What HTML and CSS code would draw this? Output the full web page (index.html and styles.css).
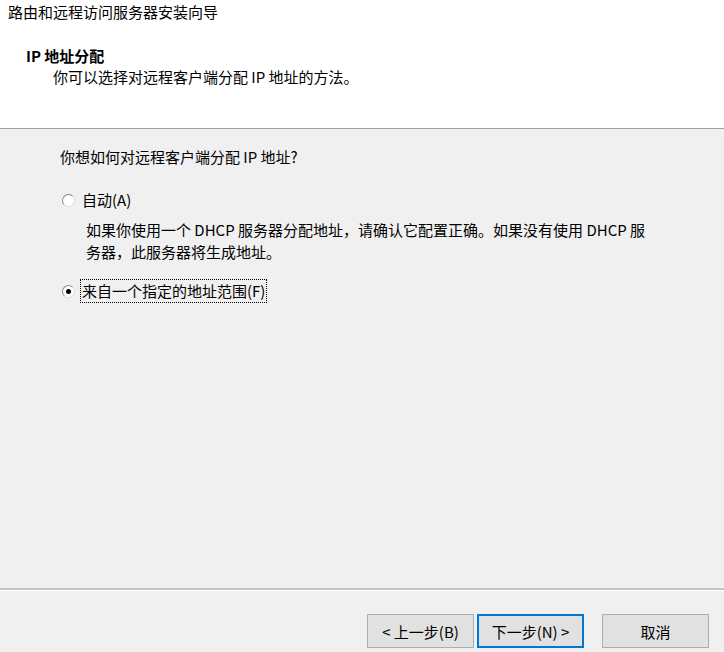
FILE: index.html
```html
<!DOCTYPE html>
<html lang="zh-CN">
<head>
<meta charset="utf-8">
<link rel="stylesheet" href="styles.css">
</head>
<body>
<div class="wizard">
  <div class="header">
    <div class="wtitle">路由和远程访问服务器安装向导</div>
    <div class="htitle">IP 地址分配</div>
    <div class="hsub">你可以选择对远程客户端分配 IP 地址的方法。</div>
  </div>
  <div class="content">
    <div class="question">你想如何对远程客户端分配 IP 地址?</div>
    <div class="option">
      <span class="radio"></span>
      <span class="label">自动(A)</span>
    </div>
    <div class="desc">如果你使用一个 DHCP 服务器分配地址，请确认它配置正确。如果没有使用 DHCP 服<br>务器，此服务器将生成地址。</div>
    <div class="option second">
      <span class="radio checked"></span>
      <span class="label focus">来自一个指定的地址范围(F)</span>
    </div>
  </div>
  <div class="footer">
    <button class="btn">&lt; 上一步(B)</button>
    <button class="btn default">下一步(N) &gt;</button>
    <button class="btn cancel">取消</button>
  </div>
</div>
</body>
</html>
```
FILE: styles.css
```css
html, body {
  margin: 0;
  padding: 0;
}
body {
  width: 724px;
  height: 652px;
  overflow: hidden;
  background: #f0f0f0;
  font-family: "Noto Sans CJK SC", "Noto Sans", sans-serif;
  font-size: 15px;
  color: #000;
}
.wizard {
  display: flex;
  flex-direction: column;
  height: 652px;
}
.header {
  background: #fff;
  height: 129px;
  box-sizing: border-box;
  border-bottom: 1px solid #a0a0a0;
  padding: 1px 0 0 8px;
}
.wtitle {
  line-height: 22px;
}
.htitle {
  margin-top: 22px;
  margin-left: 18px;
  font-weight: bold;
  line-height: 22px;
}
.hsub {
  margin-top: -1px;
  margin-left: 45px;
  line-height: 22px;
}
.content {
  flex: 1;
  padding: 17px 0 0 60px;
  border-bottom: 2px solid #c4c4c4;
  box-shadow: 0 1px 0 #fff;
}
.question {
  line-height: 22px;
}
.option {
  display: flex;
  align-items: center;
  margin-top: 21px;
  margin-left: 2px;
  line-height: 22px;
}
.option.second {
  margin-top: 17px;
}
.radio {
  width: 11px;
  height: 11px;
  border-radius: 50%;
  border: 1px solid #8a8a8a;
  border-right-color: #dcdcdc;
  border-bottom-color: #dcdcdc;
  background: #fff;
  position: relative;
  margin-right: 6px;
}
.radio.checked::after {
  content: "";
  position: absolute;
  left: 3px;
  top: 3px;
  width: 5px;
  height: 5px;
  border-radius: 50%;
  background: #000;
}
.label {
  padding: 0 1px;
}
.label.focus {
  outline: 1px dotted #000;
  outline-offset: 0;
}
.desc {
  margin: 8px 0 0 26px;
  line-height: 22px;
}
.footer {
  height: 61px;
  display: flex;
  align-items: flex-start;
  padding: 23px 0 0 367px;
  box-sizing: border-box;
  margin-top: 1px;
}
.btn {
  font-family: "Noto Sans CJK SC", "Noto Sans", sans-serif;
  font-size: 15px;
  width: 107px;
  height: 34px;
  box-sizing: border-box;
  background: #e1e1e1;
  border: 1px solid #adadad;
  padding: 0;
  margin: 0;
  color: #000;
}
.btn.default {
  border: 2px solid #0078d7;
  margin-left: 3px;
}
.btn.cancel {
  margin-left: 18px;
}
```
